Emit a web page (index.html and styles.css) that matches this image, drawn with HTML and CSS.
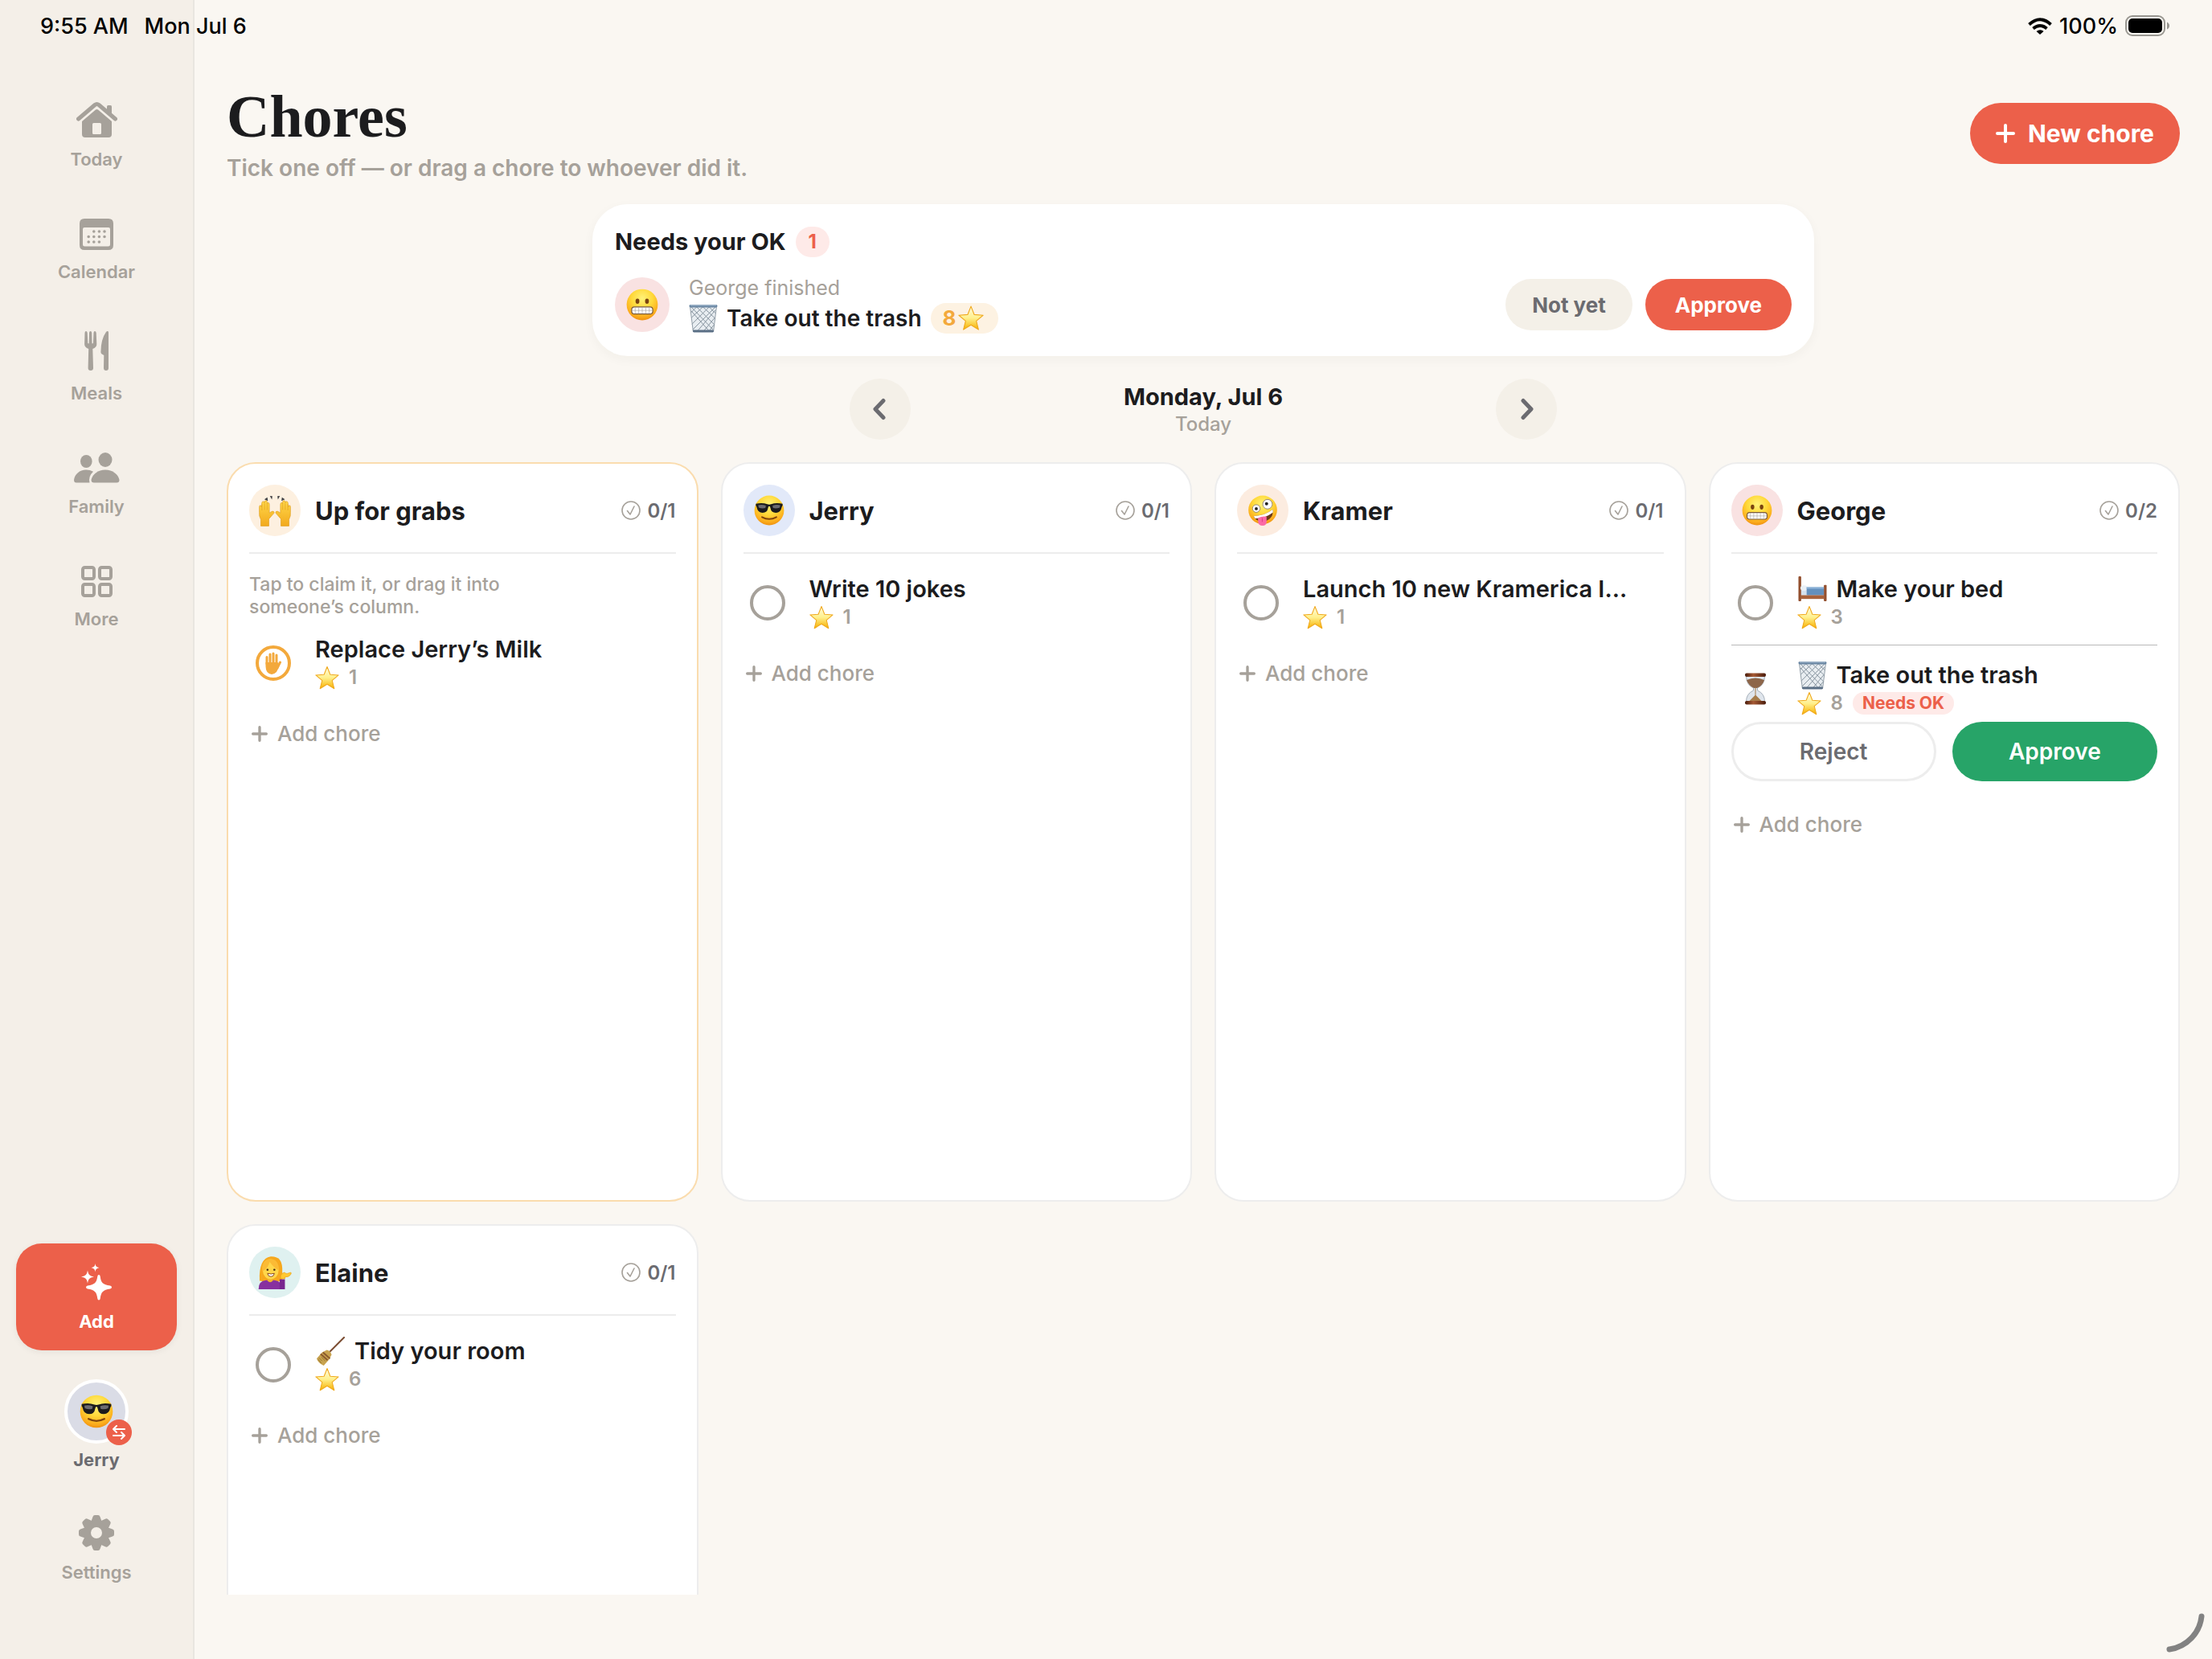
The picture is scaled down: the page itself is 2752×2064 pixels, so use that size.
FILE: index.html
```html
<!DOCTYPE html>
<html lang="en">
  <head>
    <meta charset="UTF-8" />
    <meta name="viewport" content="width=device-width, initial-scale=1.0" />
    <title>Chores</title>
    <link rel="stylesheet" href="styles.css">
  </head>

  <body>
    <!-- shared icons -->
    <svg class="sprite" width="0" height="0" aria-hidden="true">
      <defs>
        <radialGradient id="face" cx="0.5" cy="0.3" r="0.75">
          <stop offset="0" stop-color="#fff27a" />
          <stop offset="0.45" stop-color="#ffd93a" />
          <stop offset="0.8" stop-color="#fbab1c" />
          <stop offset="1" stop-color="#e8850c" />
        </radialGradient>
        <linearGradient id="skin" x1="0" y1="0" x2="0" y2="1">
          <stop offset="0" stop-color="#ffd84a" />
          <stop offset="1" stop-color="#f2a91c" />
        </linearGradient>
        <linearGradient id="gold" x1="0" y1="0" x2="0" y2="1">
          <stop offset="0" stop-color="#fffbe0" />
          <stop offset="0.5" stop-color="#fff08c" />
          <stop offset="1" stop-color="#f7b000" />
        </linearGradient>
        <linearGradient id="wood" x1="0" y1="0" x2="1" y2="0">
          <stop offset="0" stop-color="#4a1c0c" />
          <stop offset="0.4" stop-color="#a65a34" />
          <stop offset="1" stop-color="#4a1c0c" />
        </linearGradient>
      </defs>
      <symbol id="plus" viewBox="0 0 24 24">
        <path d="M12 2v20M2 12h20" stroke="currentColor" stroke-width="4" stroke-linecap="round" />
      </symbol>
      <symbol id="tick" viewBox="0 0 24 24">
        <circle cx="12" cy="12" r="11" fill="none" stroke="#a6a19a" stroke-width="1.600" />
        <path d="M7.500 12.500l3.500 4.500L16 7" fill="none" stroke="#a6a19a" stroke-width="1.600" stroke-linecap="round" stroke-linejoin="round" />
      </symbol>
      <symbol id="star" viewBox="0 0 28 27">
        <path d="M14 .500l3.600 9 9.600.7-7.400 6.200 2.400 9.400L14 20.800l-8.200 5 2.400-9.400L.800 10.200l9.600-.7z" fill="url(#gold)" stroke="#f0a91e" stroke-width="1" stroke-linejoin="round" />
      </symbol>
      <symbol id="grimace" viewBox="0 0 64 64">
        <circle cx="32" cy="32" r="31" fill="url(#face)" />
        <ellipse cx="22.500" cy="25" rx="3.800" ry="5.200" fill="#7a4410" />
        <ellipse cx="41.500" cy="25" rx="3.800" ry="5.200" fill="#7a4410" />
        <rect x="11" y="36.500" width="42" height="14" rx="5.500" fill="#fff" stroke="#7b5a3a" stroke-width="2" />
        <path d="M12 43.500h40M18 37v13M25 37v13M32 37v13M39 37v13M46 37v13" stroke="#a9a39d" stroke-width="1" />
      </symbol>
      <symbol id="cool" viewBox="0 0 64 64">
        <circle cx="32" cy="32" r="31" fill="url(#face)" />
        <path d="M4 18q14-3 24 1q4 1.500 8 0q10-4 24-1v4q-1.500 1-2 4q-2 11-12 11q-10 0-11.500-10q-.5-4-2.500-4t-2.500 4q-1.500 10-11.500 10q-10 0-12-11q-.5-3-2-4z" fill="#1b1b1d" />
        <path d="M9 21q8-2 16 1l-1 5q-7 2-14-1zM39 22q8-3 16-1l-1 5q-7 3-14 1z" fill="#6b6b70" />
        <path d="M17 46q15 8 30 0" fill="none" stroke="#80440c" stroke-width="3.500" stroke-linecap="round" />
      </symbol>
      <symbol id="zany" viewBox="0 0 64 64">
        <circle cx="32" cy="31" r="30" fill="url(#face)" />
        <circle cx="18.500" cy="28" r="8" fill="#fff" stroke="#8b7d72" stroke-width="1.500" />
        <circle cx="18.500" cy="28.500" r="3.200" fill="#222" />
        <circle cx="42" cy="19" r="10" fill="#fff" stroke="#8b7d72" stroke-width="1.500" />
        <circle cx="40" cy="18" r="3.400" fill="#222" />
        <path d="M13 44q24-1 40-14q2 13-7 20q-10 8-22 4q-8-3-11-10z" fill="#6c3a18" />
        <path d="M13 44q24-1 40-14l.500 6q-17 13-37.500 13z" fill="#fff" />
        <path d="M22 48q9-5 18-3v11q0 8-8.500 8T22.500 57z" fill="#fb6aa6" />
        <path d="M31 48v8" stroke="#d63c80" stroke-width="1.500" />
      </symbol>
      <symbol id="hands" viewBox="0 0 64 64">
        <path d="M11 10l6-4 1 7zM22 3l5 .5-1 7zM37 3.500l5-.5-4 7.500zM46 6l6 4-7 3z" fill="#3f3f42" />
        <path id="palm" d="M4 63V50Q0 43 1 36V25q0-3 2-3t2.500 3L6 17q.5-3 3-3t2.500 3v-2q.5-3 3-2.500t2 3.500v3q.5-3 2.500-2.500t2 4V37l5-3q4-1 4.500 2q0 2-3 4.500L20 49v14z" fill="url(#skin)" stroke="#dd9a18" stroke-width="1" />
        <use href="#palm" transform="translate(64 0) scale(-1 1)" />
        <path d="M6.200 20v12M11.500 18v13M16.500 19v12M57.800 20v12M52.500 18v13M47.500 19v12" stroke="#dd9a18" stroke-width="1" />
      </symbol>
      <symbol id="woman" viewBox="0 0 64 64">
        <path d="M3 48Q1 6 24 2q21-1 22 22v23q-12 7-43 1z" fill="#f6a81d" />
        <path d="M1 64q0-16 14-17h16q14 1 16 17z" fill="#87309f" />
        <path d="M41 64V45h10v19z" fill="#78258f" />
        <path d="M18 40h10v8q-5 5-10 0z" fill="#f0b52b" />
        <ellipse cx="24" cy="28" rx="15" ry="17" fill="#ffd64a" />
        <path d="M8 30Q6 9 22 6q17 0 18 22Q32 25 22 12q-3 12-14 18z" fill="#fbbb35" />
        <circle cx="18" cy="27" r="2" fill="#4e2d12" />
        <circle cx="31" cy="27" r="2" fill="#4e2d12" />
        <path d="M18 34q7 2 13 0q-1 6-6.500 6T18 34z" fill="#fff" stroke="#8a4a1c" stroke-width="1.500" />
        <path d="M43 44V38q2-5 7-6q3 3 6 2l6-2q2 1 0 4q-3 5-11 5v3z" fill="#ffc931" stroke="#e9a21b" stroke-width="1" />
      </symbol>
      <symbol id="bin" viewBox="0 0 37 37">
        <path d="M1.500 3.500h34L31.500 35.500q-13 2-26 0z" fill="#e8edf1" />
        <path d="M3 9l24 27M2 3l29 30M9 3l24 24M17 3l17 16M25 3l9 9M34 8L10 36M35 3L5 33M27 3L4 26M19 3L3 18M11 3l-8 8M33 18L18 36M32 27l-7 9" fill="none" stroke="#84919c" stroke-width="1" />
        <path d="M1.500 3L5.500 35M35.500 3l-4 32" stroke="#8f9ba6" stroke-width="1" />
        <rect x="0.500" y="1" width="36" height="3.500" rx="1.700" fill="#64829f" />
        <rect x="2" y="1.500" width="33" height="1" fill="#c0d2e2" />
        <rect x="5" y="33.500" width="27" height="3" rx="1.500" fill="#5a6f85" />
      </symbol>
      <symbol id="bed" viewBox="0 0 37 37">
        <rect x="0.500" y="2" width="3.500" height="32" rx="1" fill="#934f2e" />
        <rect x="33" y="13" width="3.500" height="21" rx="1" fill="#934f2e" />
        <rect x="4" y="26" width="29" height="5" fill="#a9623c" />
        <path d="M4 18h8v8H4z" fill="#d5e1ee" />
        <ellipse cx="7.500" cy="17" rx="4.500" ry="3.500" fill="#eaf1f8" />
        <path d="M11 16h22v10H11z" fill="#6490bd" />
        <path d="M11 16h22v2H11z" fill="#8eb4da" />
      </symbol>
      <symbol id="broom" viewBox="0 0 37 37">
        <path d="M36 1L17 20" stroke="#7a4a30" stroke-width="2" stroke-linecap="round" />
        <path d="M14 17q5 1 6 6l-3 6-7 8Q3 34 1 28l7-8z" fill="#c8a350" />
        <path d="M9 20l9 8M6 22l9 8" stroke="#8b5a2e" stroke-width="2" />
        <path d="M4 27l4 4M7 26l5 5M3 29l4 5" stroke="#96752c" stroke-width="1" />
      </symbol>
      <symbol id="glass" viewBox="0 0 27 40">
        <path d="M2 4h23q0 11-9 15v3q9 4 9 14H2q0-10 9-14v-3Q2 15 2 4z" fill="#dfe5ec" stroke="#a6afb9" stroke-width="1" />
        <path d="M2.500 9q11-5 22 0q-2 7-9 10h-4Q5 16 2.500 9z" fill="#8d664a" />
        <path d="M13 18h1v10l8 8H5l8-8z" fill="#a67c4b" />
        <rect x="0.500" y="0.500" width="26" height="4.500" rx="2" fill="url(#wood)" />
        <rect x="0.500" y="35" width="26" height="4.500" rx="2" fill="url(#wood)" />
      </symbol>
    </svg>

    <aside class="sidebar">
      <nav class="nav">
        <a class="nav-item" href="#">
          <svg width="51" height="45" viewBox="0 0 51 45">
            <path d="M2.500 22L23 4.500q2.500-2 5 0L48.500 22" fill="none" stroke="currentColor" stroke-width="5" stroke-linecap="round" />
            <path d="M38 13V6.500q0-1.500 1.500-1.500h3q1.500 0 1.500 1.500V18z" fill="currentColor" />
            <path fill-rule="evenodd" d="M7 25L24 10.500q1.500-1 3 0L44 25v16q0 4-4 4H11q-4 0-4-4zM20 28.500v11q0 1.500 1.500 1.500h8q1.500 0 1.500-1.500v-11q0-1.500-1.500-1.500h-8q-1.500 0-1.500 1.500z" fill="currentColor" />
          </svg>
          Today
        </a>
        <a class="nav-item" href="#">
          <svg width="42" height="39" viewBox="0 0 42 39">
            <path fill-rule="evenodd" d="M6 0h30q6 0 6 6v27q0 6-6 6H6q-6 0-6-6V6q0-6 6-6zM6 11q-2 0-2 2v19q0 2.500 2.500 2.500h29q2.500 0 2.500-2.500V13q0-2-2-2z" fill="currentColor" />
            <path d="M17.800 16h0M24.400 16h0M31 16h0M11.200 22.500h0M17.800 22.500h0M24.400 22.500h0M31 22.500h0M11.200 29h0M17.800 29h0M24.400 29h0" stroke="currentColor" stroke-width="3.600" stroke-linecap="round" />
          </svg>
          Calendar
        </a>
        <a class="nav-item" href="#">
          <svg width="30" height="50" viewBox="0 0 30 50" fill="currentColor">
            <path d="M.500 2Q.700 0 2 0t1.700 2l.6 13q1.400 1 1.400-.5L6 2q.2-2 1.600-2t1.600 2l.3 12.500q0 1.500 1.400.5l.6-13q.2-2 1.500-2t1.700 2L15.300 16q.2 4-5 6l.7 24q0 3-3.200 3t-3.200-3l.6-24Q0 20 .100 16z" />
            <path d="M27 1q3-2.500 3 1v44q0 3-3 3t-3-3l.3-16q-4-1.500-3.900-4Q20.500 10 27 1z" />
          </svg>
          Meals
        </a>
        <a class="nav-item" href="#">
          <svg width="57" height="40" viewBox="0 0 57 40" fill="currentColor">
            <ellipse cx="15.300" cy="11" rx="7.300" ry="8" />
            <ellipse cx="39" cy="9" rx="8.500" ry="9" />
            <path d="M3 37.500q-3 0-3-3.500C1 27 7 21.500 15 21.500q5 0 9 2.200-6.500 6-4.500 13.800z" />
            <path d="M25 37.500q-3.500 0-3.500-3.500C23 27 30 21.500 39 21.500S55 27 56.500 34q0 3.500-3.500 3.500z" />
          </svg>
          Family
        </a>
        <a class="nav-item" href="#">
          <svg width="39" height="39" viewBox="0 0 39 39" fill="none" stroke="currentColor" stroke-width="4">
            <rect x="2" y="2" width="14" height="14" rx="2.500" />
            <rect x="23" y="2" width="14" height="14" rx="2.500" />
            <rect x="2" y="23" width="14" height="14" rx="2.500" />
            <rect x="23" y="23" width="14" height="14" rx="2.500" />
          </svg>
          More
        </a>
      </nav>

      <div class="side-bottom">
        <button class="add-btn" type="button">
          <svg width="38" height="46" viewBox="0 0 38 46" fill="#fff">
            <path d="M22 14q1.500 0 1.700 2c1 8 3 10 12.300 11.500q2 .3 2 2t-2 2C27 33 25 35 23.700 43.500q-.2 2-1.700 2t-1.700-2C19 35 17 33 8 31.500q-2-.3-2-2t2-2C17 26 19 24 20.300 16q.2-2 1.700-2z" />
            <path d="M8 8.500c1 5.500 2 6.500 8 8-6 1.500-7 2.500-8 8-1-5.500-2-6.500-8-8 6-1.500 7-2.500 8-8z" />
            <path d="M17.500 0c.6 3.500 1.200 4.200 5 5.200-3.800 1-4.400 1.700-5 5.200-.6-3.500-1.200-4.200-5-5.200 3.800-1 4.400-1.700 5-5.200z" />
          </svg>
          Add
        </button>
        <button class="profile" type="button">
          <span class="profile-pic">
            <svg width="42" height="42"><use href="#cool" /></svg>
            <span class="swap">
              <svg width="16" height="18" viewBox="0 0 16 18" fill="none" stroke="#fff" stroke-width="2" stroke-linecap="round" stroke-linejoin="round">
                <path d="M15 5H1.500M5 1L1 5l4 4M1 13h13.500M11 9l4 4-4 4" />
              </svg>
            </span>
          </span>
          Jerry
        </button>
        <a class="nav-item" href="#">
          <svg width="44" height="44" viewBox="-22 -22 44 44" fill="currentColor">
            <circle r="11.500" fill="none" stroke="currentColor" stroke-width="9" />
            <path id="tooth" d="M-7-13l2.500-7q.5-2 2.500-2h4q2 0 2.500 2l2.500 7z" />
            <use href="#tooth" transform="rotate(45)" />
            <use href="#tooth" transform="rotate(90)" />
            <use href="#tooth" transform="rotate(135)" />
            <use href="#tooth" transform="rotate(180)" />
            <use href="#tooth" transform="rotate(225)" />
            <use href="#tooth" transform="rotate(270)" />
            <use href="#tooth" transform="rotate(315)" />
          </svg>
          Settings
        </a>
      </div>
    </aside>

    <div class="status">
      <span>9:55 AM</span>
      <span>Mon Jul 6</span>
      <span class="status-right">
        <svg width="30" height="21" viewBox="0 0 30 21" fill="none" stroke="#000" stroke-width="4">
          <path d="M1.500 8.500Q15-4 28.500 8.500M6.500 13.500q8.500-7 17 0" />
          <path d="M10.500 17q4.500-3.500 9 0L15 21z" fill="#000" stroke="none" />
        </svg>
        100%
        <svg width="56" height="26" viewBox="0 0 56 26">
          <rect x="1" y="1" width="48" height="24" rx="8" fill="none" stroke="#999791" stroke-width="2" />
          <rect x="4" y="4" width="42" height="18" rx="5" fill="#000" />
          <path d="M52 8.500q3 1.500 3 4.500t-3 4.500z" fill="#999791" />
        </svg>
      </span>
    </div>

    <main class="main">
      <header class="page-head">
        <div>
          <h1>Chores</h1>
          <p>Tick one off — or drag a chore to whoever did it.</p>
        </div>
        <button class="new-btn" type="button">
          <svg width="24" height="24"><use href="#plus" /></svg>
          New chore
        </button>
      </header>

      <section class="review">
        <h2>Needs your OK <span class="count">1</span></h2>
        <div class="review-row">
          <span class="avatar big red"><svg width="40" height="40"><use href="#grimace" /></svg></span>
          <div class="review-text">
            <p class="who">George finished</p>
            <p class="what">
              <svg width="36" height="36"><use href="#bin" /></svg>
              Take out the trash
              <span class="points">8<svg width="32" height="32"><use href="#star" /></svg></span>
            </p>
          </div>
          <button class="pill-btn" type="button">Not yet</button>
          <button class="pill-btn coral" type="button">Approve</button>
        </div>
      </section>

      <div class="day">
        <button class="day-btn" type="button" aria-label="Previous day">
          <svg width="18" height="28" viewBox="0 0 18 28" fill="none" stroke="currentColor" stroke-width="5" stroke-linecap="round" stroke-linejoin="round"><path d="M13 3.500L3 14l10 10.500" /></svg>
        </button>
        <div class="day-text">
          <h2>Monday, Jul 6</h2>
          <p>Today</p>
        </div>
        <button class="day-btn" type="button" aria-label="Next day">
          <svg width="18" height="28" viewBox="0 0 18 28" fill="none" stroke="currentColor" stroke-width="5" stroke-linecap="round" stroke-linejoin="round"><path d="M5 3.500L15 14 5 24.500" /></svg>
        </button>
      </div>

      <div class="board">
        <section class="card grabs">
          <header>
            <span class="avatar amber"><svg width="40" height="40"><use href="#hands" /></svg></span>
            <h3>Up for grabs</h3>
            <span class="done"><svg width="24" height="24"><use href="#tick" /></svg>0/1</span>
          </header>
          <p class="hint">Tap to claim it, or drag it into<br>someone’s column.</p>
          <ul>
            <li class="chore">
              <button class="claim" type="button" aria-label="Claim Replace Jerry’s Milk">
                <svg width="20" height="28" viewBox="0 0 20 28" fill="none" stroke="currentColor" stroke-width="3" stroke-linecap="round">
                  <path d="M2 15V6.500M6 14V3M10 14V2M14 14V4M18.500 13L15 20" />
                  <path d="M.500 13h15l1.500 3q-1 11-9 12Q.500 27 .500 18z" fill="currentColor" stroke="none" />
                </svg>
              </button>
              <div class="chore-text">
                <span class="title">Replace Jerry’s Milk</span>
                <span class="sub"><svg width="30" height="29"><use href="#star" /></svg>1</span>
              </div>
            </li>
          </ul>
          <button class="add-chore" type="button"><svg width="20" height="20"><use href="#plus" /></svg>Add chore</button>
        </section>

        <section class="card">
          <header>
            <span class="avatar blue"><svg width="38" height="38"><use href="#cool" /></svg></span>
            <h3>Jerry</h3>
            <span class="done"><svg width="24" height="24"><use href="#tick" /></svg>0/1</span>
          </header>
          <ul>
            <li class="chore">
              <input type="checkbox" id="jokes">
              <label class="chore-text" for="jokes">
                <span class="title">Write 10 jokes</span>
                <span class="sub"><svg width="30" height="29"><use href="#star" /></svg>1</span>
              </label>
            </li>
          </ul>
          <button class="add-chore" type="button"><svg width="20" height="20"><use href="#plus" /></svg>Add chore</button>
        </section>

        <section class="card">
          <header>
            <span class="avatar peach"><svg width="38" height="38"><use href="#zany" /></svg></span>
            <h3>Kramer</h3>
            <span class="done"><svg width="24" height="24"><use href="#tick" /></svg>0/1</span>
          </header>
          <ul>
            <li class="chore">
              <input type="checkbox" id="kramerica">
              <label class="chore-text" for="kramerica">
                <span class="title">Launch 10 new Kramerica I…</span>
                <span class="sub"><svg width="30" height="29"><use href="#star" /></svg>1</span>
              </label>
            </li>
          </ul>
          <button class="add-chore" type="button"><svg width="20" height="20"><use href="#plus" /></svg>Add chore</button>
        </section>

        <section class="card">
          <header>
            <span class="avatar red"><svg width="38" height="38"><use href="#grimace" /></svg></span>
            <h3>George</h3>
            <span class="done"><svg width="24" height="24"><use href="#tick" /></svg>0/2</span>
          </header>
          <ul>
            <li class="chore">
              <input type="checkbox" id="bed-chore">
              <label class="chore-text" for="bed-chore">
                <span class="title"><svg width="38" height="36"><use href="#bed" /></svg>Make your bed</span>
                <span class="sub"><svg width="30" height="29"><use href="#star" /></svg>3</span>
              </label>
            </li>
            <li class="chore waiting">
              <span class="wait-icon"><svg width="28" height="40"><use href="#glass" /></svg></span>
              <div class="chore-text">
                <span class="title"><svg width="38" height="36"><use href="#bin" /></svg>Take out the trash</span>
                <span class="sub"><svg width="30" height="29"><use href="#star" /></svg>8 <span class="needs">Needs OK</span></span>
              </div>
            </li>
          </ul>
          <div class="decide">
            <button class="reject" type="button">Reject</button>
            <button class="approve" type="button">Approve</button>
          </div>
          <button class="add-chore" type="button"><svg width="20" height="20"><use href="#plus" /></svg>Add chore</button>
        </section>

        <section class="card">
          <header>
            <span class="avatar teal"><svg width="42" height="42"><use href="#woman" /></svg></span>
            <h3>Elaine</h3>
            <span class="done"><svg width="24" height="24"><use href="#tick" /></svg>0/1</span>
          </header>
          <ul>
            <li class="chore">
              <input type="checkbox" id="tidy">
              <label class="chore-text" for="tidy">
                <span class="title"><svg width="38" height="36"><use href="#broom" /></svg>Tidy your room</span>
                <span class="sub"><svg width="30" height="29"><use href="#star" /></svg>6</span>
              </label>
            </li>
          </ul>
          <button class="add-chore" type="button"><svg width="20" height="20"><use href="#plus" /></svg>Add chore</button>
        </section>
      </div>
    </main>

    <svg class="corner" width="64" height="64" viewBox="0 0 64 64" aria-hidden="true">
      <path d="M51 11C49 31 33 49 11 52" fill="none" stroke="#828282" stroke-width="7" stroke-linecap="round" />
    </svg>
  </body>
</html>
```

FILE: styles.css
```css
* {
  margin: 0;
  padding: 0;
  box-sizing: border-box;
}

body {
  display: grid;
  grid-template-columns: 242px 1fr;
  grid-template-rows: 64px 1fr;
  height: 100vh;
  overflow: hidden;
  background: #faf7f2;
  color: #1c1c1e;
  font-family: Inter, "Liberation Sans", sans-serif;
}

button {
  border: none;
  background: none;
  font-family: inherit;
  cursor: pointer;
}

svg {
  display: block;
  flex: none;
}

ul {
  list-style: none;
}

.sprite {
  position: absolute;
}

/* sidebar */
.sidebar {
  grid-row: 1 / 3;
  grid-column: 1;
  display: flex;
  flex-direction: column;
  justify-content: space-between;
  padding: 126px 20px 95px;
  border-right: 2px solid #e9e6e0;
  background: #f4efe8;
}

.nav {
  display: flex;
  flex-direction: column;
  gap: 61px;
}

.nav-item {
  display: flex;
  flex-direction: column;
  align-items: center;
  gap: 14px;
  color: #a6a19a;
  font-size: 22px;
  font-weight: 600;
  line-height: 26px;
  text-decoration: none;
}

.side-bottom {
  display: flex;
  flex-direction: column;
  align-items: stretch;
}

.add-btn {
  display: flex;
  flex-direction: column;
  align-items: center;
  gap: 13px;
  padding: 25px 0 23px;
  border-radius: 32px;
  background: #ec604a;
  box-shadow: 0 2px 8px rgba(0, 0, 0, 0.06);
  color: #fff;
  font-size: 22px;
  font-weight: 700;
  line-height: 26px;
}

.profile {
  display: flex;
  flex-direction: column;
  align-items: center;
  gap: 7px;
  margin: 36px 0 56px;
  color: #6b6b70;
  font-size: 22px;
  font-weight: 700;
  line-height: 26px;
}

.profile-pic {
  position: relative;
  display: flex;
  align-items: center;
  justify-content: center;
  width: 80px;
  height: 80px;
  border: 4px solid #fff;
  border-radius: 50%;
  background: #dadce6;
}

.swap {
  position: absolute;
  right: -8px;
  bottom: -6px;
  display: flex;
  align-items: center;
  justify-content: center;
  width: 32px;
  height: 32px;
  border-radius: 50%;
  background: #ec604a;
}

/* status bar */
.status {
  grid-row: 1;
  grid-column: 1 / 3;
  display: flex;
  align-items: center;
  gap: 20px;
  padding: 0 52px 0 50px;
  color: #000;
  font-size: 27px;
  font-weight: 500;
}

.status-right {
  display: flex;
  align-items: center;
  gap: 9px;
  margin-left: auto;
}

/* main */
.main {
  grid-row: 2;
  grid-column: 2;
  display: flex;
  flex-direction: column;
  gap: 28px;
  min-height: 0;
  padding: 42px 40px 80px;
}

.page-head {
  display: flex;
  align-items: center;
  justify-content: space-between;
}

.page-head h1 {
  font-family: "Liberation Serif", serif;
  font-size: 74px;
  line-height: 78px;
}

.page-head p {
  margin-top: 8px;
  color: #a6a19a;
  font-size: 28px;
  font-weight: 600;
  line-height: 34px;
}

.new-btn {
  display: flex;
  align-items: center;
  gap: 16px;
  height: 76px;
  padding: 0 32px;
  border-radius: 38px;
  background: #ec604a;
  color: #fff;
  font-size: 30px;
  font-weight: 700;
}

.avatar {
  display: flex;
  flex: none;
  align-items: center;
  justify-content: center;
  width: 64px;
  height: 64px;
  border-radius: 50%;
}

.avatar.big {
  width: 68px;
  height: 68px;
}

.red {
  background: #f9e2e2;
}

.blue {
  background: #e2e9f9;
}

.peach {
  background: #fcece0;
}

.amber {
  background: #fdf0e0;
}

.teal {
  background: #dff1f0;
}

.review {
  align-self: center;
  width: 100%;
  max-width: 1520px;
  padding: 28px;
  border-radius: 44px;
  background: #fff;
  box-shadow: 0 4px 14px rgba(60, 40, 10, 0.04);
}

.review h2 {
  display: flex;
  align-items: center;
  gap: 12px;
  font-size: 29px;
  font-weight: 700;
  line-height: 38px;
}

.count {
  min-width: 42px;
  border-radius: 19px;
  background: #feeae8;
  color: #ec604a;
  font-size: 24px;
  text-align: center;
}

.review-row {
  display: flex;
  align-items: center;
  gap: 16px;
  margin-top: 23px;
}

.review-text {
  flex: 1;
  padding-left: 8px;
}

.who {
  margin-bottom: 4px;
  color: #a6a19a;
  font-size: 25px;
  line-height: 30px;
}

.what {
  display: flex;
  align-items: center;
  gap: 11px;
  font-size: 28px;
  font-weight: 600;
  line-height: 38px;
}

.points {
  display: flex;
  align-items: center;
  gap: 2px;
  padding: 0 18px 0 15px;
  border-radius: 19px;
  background: #fdf2e2;
  color: #f3a93c;
  font-size: 26px;
  font-weight: 700;
}

.pill-btn {
  height: 64px;
  padding: 0 33px;
  border-radius: 32px;
  background: #f4f0e8;
  color: #6b6b70;
  font-size: 26px;
  font-weight: 700;
}

.pill-btn.coral {
  padding: 0 37px;
  background: #ec604a;
  color: #fff;
}

.day {
  display: flex;
  align-self: center;
  align-items: center;
  justify-content: space-between;
  width: 100%;
  max-width: 880px;
}

.day-btn {
  display: flex;
  align-items: center;
  justify-content: center;
  width: 76px;
  height: 76px;
  border-radius: 50%;
  background: #f4f0e8;
  color: #6b6b70;
}

.day-text {
  padding-top: 2px;
  text-align: center;
}

.day-text h2 {
  font-size: 29px;
  font-weight: 700;
  line-height: 36px;
}

.day-text p {
  color: #a6a19a;
  font-size: 24px;
  font-weight: 500;
  line-height: 32px;
}

/* board */
.board {
  display: grid;
  flex: 1;
  grid-template-columns: repeat(4, minmax(0, 1fr));
  grid-auto-rows: minmax(920px, max-content);
  gap: 28px;
  min-height: 0;
  overflow: hidden;
}

.card {
  padding: 26px;
  border: 2px solid #ededed;
  border-radius: 36px;
  background: #fff;
}

.card.grabs {
  border-color: #fadcae;
}

.card header {
  display: flex;
  align-items: center;
  gap: 18px;
  padding-bottom: 20px;
  border-bottom: 2px solid #ececec;
}

.card h3 {
  flex: 1;
  font-size: 31px;
  font-weight: 700;
}

.done {
  display: flex;
  align-items: center;
  gap: 8px;
  color: #6b6b70;
  font-size: 24px;
  font-weight: 600;
}

.card ul {
  margin-top: 7px;
}

.hint {
  margin-top: 24px;
  padding-bottom: 2px;
  color: #a6a19a;
  font-size: 23px;
  font-weight: 500;
  line-height: 28px;
}

.hint + ul {
  margin-top: 0;
}

.chore {
  display: flex;
  align-items: center;
  gap: 30px;
  padding: 19px 0 17px 8px;
}

.chore input,
.claim {
  flex: none;
  width: 44px;
  height: 44px;
  border: 4px solid #a6a19a;
  border-radius: 50%;
  appearance: none;
}

.claim {
  display: flex;
  align-items: center;
  justify-content: center;
  border-color: #f3a93c;
  color: #f3a93c;
}

.chore.waiting {
  padding-bottom: 6px;
  border-top: 1px solid #b8b8b8;
}

.wait-icon {
  display: flex;
  justify-content: center;
  width: 44px;
}

.chore-text {
  min-width: 0;
}

.title,
.sub {
  display: flex;
  align-items: center;
}

.title {
  gap: 11px;
  font-size: 29px;
  font-weight: 600;
  line-height: 36px;
  white-space: nowrap;
}

.sub {
  gap: 12px;
  color: #a6a19a;
  font-size: 24px;
  font-weight: 600;
  line-height: 34px;
}

.needs {
  padding: 0 12px;
  border-radius: 14px;
  background: #feeae8;
  color: #ec604a;
  font-size: 21px;
  font-weight: 700;
  line-height: 28px;
}

.decide {
  display: grid;
  grid-template-columns: 1fr 1fr;
  gap: 20px;
  margin-bottom: 18px;
}

.decide button {
  height: 74px;
  border-radius: 37px;
  font-size: 28px;
  font-weight: 600;
}

.reject {
  border: 3px solid #ededed;
  color: #6b6b70;
}

.approve {
  background: #27a468;
  color: #fff;
}

.add-chore {
  display: flex;
  align-items: center;
  gap: 12px;
  padding: 20px 3px;
  color: #a6a19a;
  font-size: 26px;
  font-weight: 500;
  line-height: 32px;
}

/* resize handle */
.corner {
  position: absolute;
  right: 0;
  bottom: 0;
}
```
